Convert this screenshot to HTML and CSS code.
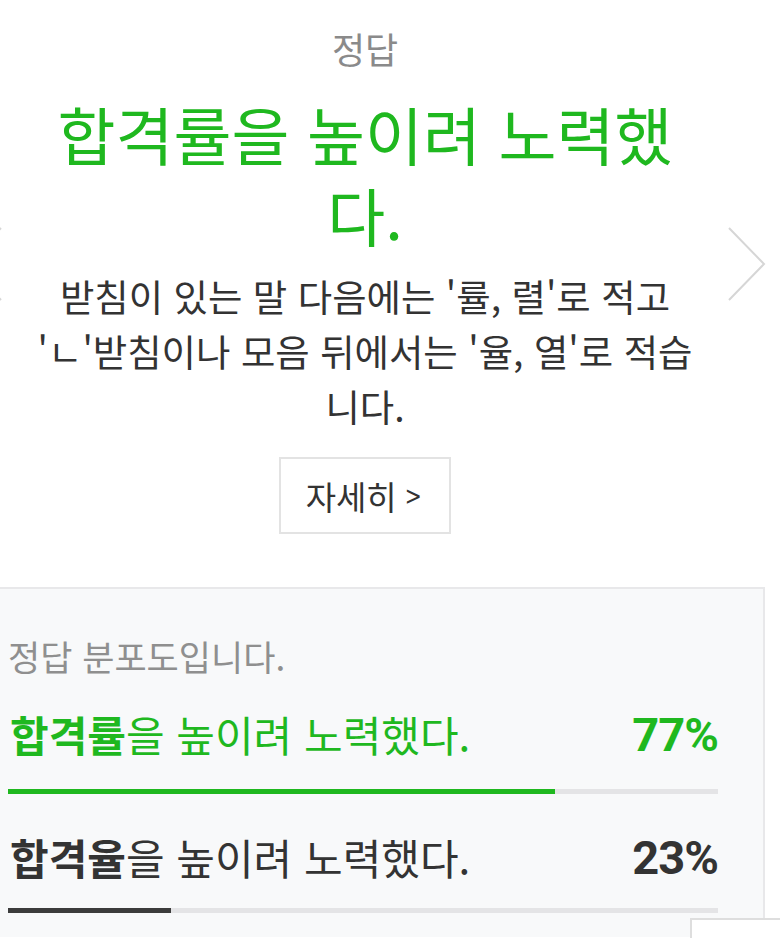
FILE: index.html
```html
<!DOCTYPE html>
<html lang="ko">
<head>
<meta charset="utf-8">
<title>정답</title>
<link rel="stylesheet" href="styles.css">
</head>
<body>
<main class="quiz">
  <section class="answer">
    <div class="label">정답</div>
    <h1 class="title">합격률을 높이려 노력했다.</h1>
    <p class="desc">받침이 있는 말 다음에는 '률, 렬'로 적고 'ㄴ'받침이나 모음 뒤에서는 '율, 열'로 적습니다.</p>
    <a class="more" href="#">자세히<span class="more-arrow">&gt;</span></a>
  </section>

  <button class="nav nav-prev" aria-label="이전">
    <svg width="40" height="76" viewBox="0 0 40 76"><polyline points="37,1 2,37 37,73" fill="none" stroke="#d6d6d6" stroke-width="2"/></svg>
  </button>
  <button class="nav nav-next" aria-label="다음">
    <svg width="40" height="76" viewBox="0 0 40 76"><polyline points="2,1 37,37 2,73" fill="none" stroke="#d6d6d6" stroke-width="2"/></svg>
  </button>

  <section class="dist">
    <p class="dist-title">정답 분포도입니다.</p>
    <div class="opt opt-correct">
      <div class="opt-row">
        <span class="opt-text"><b>합격률</b>을 높이려 노력했다.</span>
        <span class="pct">77%</span>
      </div>
      <div class="bar"><div class="fill" style="width:77%"></div></div>
    </div>
    <div class="opt opt-wrong">
      <div class="opt-row">
        <span class="opt-text"><b>합격율</b>을 높이려 노력했다.</span>
        <span class="pct">23%</span>
      </div>
      <div class="bar"><div class="fill" style="width:23%"></div></div>
    </div>
  </section>
  <div class="corner-box"></div>
</main>
</body>
</html>
```

FILE: styles.css
```css
* { box-sizing: border-box; }
html, body { margin: 0; padding: 0; }
body {
  background: #ffffff;
  font-family: "Noto Sans CJK KR", "Noto Sans", sans-serif;
  color: #333333;
  width: 780px;
  height: 938px;
  overflow: hidden;
}
.quiz {
  position: relative;
  width: 780px;
  height: 938px;
  overflow: hidden;
}
.answer {
  width: 730px;
  padding: 26px 33px 0;
  display: flex;
  flex-direction: column;
  align-items: center;
  text-align: center;
}
.label {
  font-size: 36px;
  line-height: 44px;
  color: #8a8a8a;
}
.title {
  margin: 22px 0 0;
  font-size: 63px;
  line-height: 81px;
  font-weight: 400;
  color: #1fb81f;
}
.desc {
  margin: 15px 0 0;
  font-size: 37.4px;
  line-height: 55px;
  color: #333333;
}
.more {
  margin-top: 23px;
  width: 172px;
  height: 77px;
  border: 2px solid #e3e3e3;
  display: flex;
  align-items: center;
  justify-content: center;
  gap: 5px;
  font-size: 33px;
  color: #333333;
  text-decoration: none;
}
.more-arrow {
  font-family: "DejaVu Sans", sans-serif;
  font-size: 27px;
  font-weight: 400;
  transform: scaleX(0.75);
}
.nav {
  position: absolute;
  top: 227px;
  border: 0;
  padding: 0;
  background: none;
  width: 40px;
  height: 76px;
}
.nav-next { left: 727px; }
.nav-prev { left: -36px; }
.dist {
  margin-top: 53px;
  width: 765px;
  height: 350px;
  background: #f8f9fa;
  border-top: 2px solid #e8e8ea;
  border-right: 2px solid #e8e8ea;
  padding: 45px 45px 0 8px;
}
.dist-title {
  margin: 0;
  font-size: 35px;
  line-height: 44px;
  color: #8f8f8f;
}
.opt-row {
  display: flex;
  justify-content: space-between;
  align-items: center;
  height: 50px;
}
.opt-correct { margin-top: 31px; }
.opt-wrong { margin-top: 38px; }
.opt-text {
  font-size: 42px;
  line-height: 50px;
  padding-left: 2px;
}
.opt-text b { font-weight: 700; }
.pct {
  font-family: "Roboto", "Noto Sans", sans-serif;
  font-size: 47px;
  font-weight: 700;
  letter-spacing: -1px;
}
.opt-correct .opt-text, .opt-correct .pct { color: #1fb81f; }
.opt-wrong .opt-text, .opt-wrong .pct { color: #333333; }
.bar {
  height: 5px;
  background: #e4e4e6;
}
.opt-correct .bar { margin-top: 30px; }
.opt-wrong .bar { margin-top: 26px; }
.fill { height: 100%; }
.opt-correct .fill { background: #1fb81f; }
.opt-wrong .fill { background: #3c3c3c; }
.corner-box {
  position: absolute;
  left: 690px;
  top: 918px;
  width: 90px;
  height: 20px;
  background: #ffffff;
  border-top: 2px solid #dedede;
  border-left: 2px solid #dedede;
}
```
